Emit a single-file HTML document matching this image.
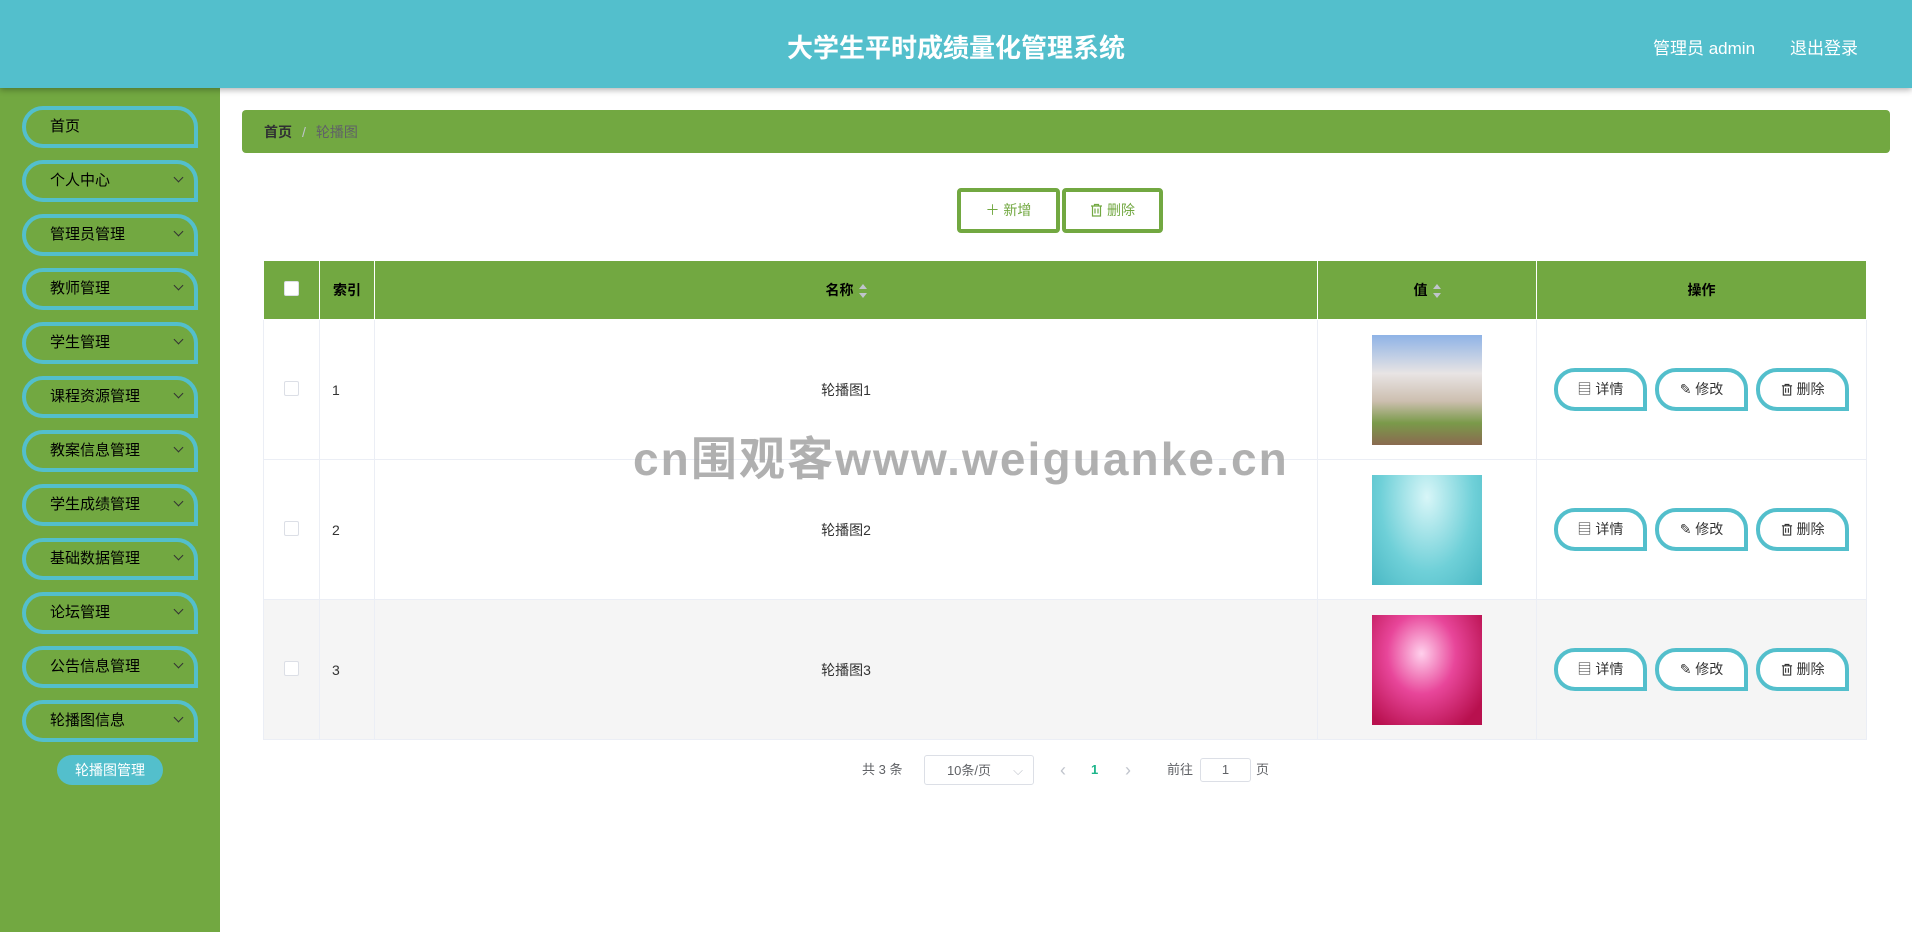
<!DOCTYPE html>
<html><head><meta charset="utf-8"><style>
*{box-sizing:border-box;margin:0;padding:0}
body{width:1912px;height:932px;position:relative;background:#fff;font-family:"Liberation Sans","Noto Sans CJK SC",sans-serif;overflow:hidden;color:#333}
.hdr{position:absolute;left:0;top:0;width:1912px;height:88px;background:#53bfcc;box-shadow:0 2px 6px rgba(0,0,0,.3);z-index:2}
.hdr .t{position:absolute;left:0;width:1912px;top:28px;text-align:center;font-size:26px;font-weight:bold;color:#fff}
.hdr .r{position:absolute;top:34px;font-size:17px;color:#fff}
.side{position:absolute;left:0;top:88px;width:220px;height:844px;background:#72a841}
.mi{position:absolute;left:22px;width:176px;height:42px;border:4px solid #53bfcc;border-radius:21px 21px 0 21px;font-size:15px;color:#000;padding-left:24px;line-height:34px}
.mi .c{position:absolute;right:12px;top:10px;width:7px;height:7px;border-right:1px solid #333;border-bottom:1px solid #333;transform:rotate(45deg)}
.sub{position:absolute;left:57px;top:755px;width:106px;height:30px;background:#53bfcc;border-radius:15px;color:#fff;font-size:14px;text-align:center;line-height:30px}
.bc{position:absolute;left:242px;top:110px;width:1648px;height:43px;background:#72a841;border-radius:4px;font-size:14px;line-height:45px;padding-left:22px}
.btn{position:absolute;top:188px;height:45px;border:4px solid #72a841;border-radius:4px;background:#fff;color:#72a841;font-size:14px;text-align:center;line-height:37px}
table{position:absolute;left:263px;top:260px;border-collapse:collapse;font-size:14px}
td,th{border:1px solid #ebeef5;text-align:center}
th{background:#72a841;height:59px;color:#000;font-weight:bold;border-color:#fff}
td{height:140px}
.cb{display:inline-block;width:15px;height:15px;border:1px solid #dcdfe6;border-radius:2px;background:#fff}
.ab{display:inline-block;width:93px;height:43px;border:4px solid #53bfcc;border-radius:21px 21px 0 21px;font-size:14px;line-height:35px;margin:0 4px;color:#333;background:#fff}
.sort{display:inline-block;vertical-align:middle;margin-left:5px;width:8px;height:14px;position:relative}
.sort:before{content:"";position:absolute;top:0;left:0;border:4px solid transparent;border-bottom:5px solid #c0c4cc;border-top:0}
.sort:after{content:"";position:absolute;bottom:0;left:0;border:4px solid transparent;border-top:5px solid #c0c4cc;border-bottom:0}
.img{display:inline-block;width:110px;height:110px;vertical-align:middle}
.wm{position:absolute;left:633px;top:423px;font-size:46px;font-weight:bold;color:rgba(150,150,150,.75);letter-spacing:2.1px;white-space:nowrap}
.pg{position:absolute;top:755px;font-size:13px;color:#606266;line-height:30px}
svg.i{vertical-align:-2px;margin-right:4px}
</style></head><body>
<div class="hdr"><div class="t">大学生平时成绩量化管理系统</div><div class="r" style="left:1653px">管理员 admin</div><div class="r" style="left:1790px">退出登录</div></div>
<div class="side">
<div class="mi" style="top:18px">首页</div>
<div class="mi" style="top:72px">个人中心<span class="c"></span></div>
<div class="mi" style="top:126px">管理员管理<span class="c"></span></div>
<div class="mi" style="top:180px">教师管理<span class="c"></span></div>
<div class="mi" style="top:234px">学生管理<span class="c"></span></div>
<div class="mi" style="top:288px">课程资源管理<span class="c"></span></div>
<div class="mi" style="top:342px">教案信息管理<span class="c"></span></div>
<div class="mi" style="top:396px">学生成绩管理<span class="c"></span></div>
<div class="mi" style="top:450px">基础数据管理<span class="c"></span></div>
<div class="mi" style="top:504px">论坛管理<span class="c"></span></div>
<div class="mi" style="top:558px">公告信息管理<span class="c"></span></div>
<div class="mi" style="top:612px">轮播图信息<span class="c"></span></div>
</div>
<div class="sub">轮播图管理</div>
<div class="bc"><b style="color:#303133">首页</b><span style="color:#c0c4cc;margin:0 10px">/</span><span style="color:#606266">轮播图</span></div>
<div class="btn" style="left:957px;width:103px">＋ 新增</div>
<div class="btn" style="left:1062px;width:101px"><svg class="i" width="13" height="14" viewBox="0 0 13 14" fill="none" stroke="#72a841" stroke-width="1.2"><path d="M1 3h11M4.5 3V1.5h4V3M2.5 3v10h8V3M5 5.5v5M8 5.5v5"/></svg>删除</div>
<table>
<tr><th style="width:56px"><span class="cb"></span></th><th style="width:55px">索引</th><th style="width:943px">名称<span class="sort"></span></th><th style="width:219px">值<span class="sort"></span></th><th style="width:330px">操作</th></tr>
<tr><td><span class="cb"></span></td><td style="text-align:left;padding-left:12px">1</td><td>轮播图1</td><td><span class="img" style="background:linear-gradient(180deg,#8fb3e6 0%,#e8e4e4 35%,#cdbfb0 60%,#7a9a4a 80%,#8a6a50 100%)"></span></td><td><span class="ab">▤ 详情</span><span class="ab">✎ 修改</span><span class="ab"><svg class="i" width="12" height="13" viewBox="0 0 13 14" fill="none" stroke="#333" stroke-width="1.2"><path d="M1 3h11M4.5 3V1.5h4V3M2.5 3v10h8V3M5 5.5v5M8 5.5v5"/></svg>删除</span></td></tr>
<tr><td><span class="cb"></span></td><td style="text-align:left;padding-left:12px">2</td><td>轮播图2</td><td><span class="img" style="background:radial-gradient(ellipse at 50% 20%,#d8f6f8,#6fd0d8 60%,#4ab8c4)"></span></td><td><span class="ab">▤ 详情</span><span class="ab">✎ 修改</span><span class="ab"><svg class="i" width="12" height="13" viewBox="0 0 13 14" fill="none" stroke="#333" stroke-width="1.2"><path d="M1 3h11M4.5 3V1.5h4V3M2.5 3v10h8V3M5 5.5v5M8 5.5v5"/></svg>删除</span></td></tr>
<tr style="background:#f5f5f5"><td><span class="cb"></span></td><td style="text-align:left;padding-left:12px">3</td><td>轮播图3</td><td><span class="img" style="background:radial-gradient(ellipse at 45% 35%,#ffd0ec,#e8469a 40%,#b8104e 85%)"></span></td><td><span class="ab">▤ 详情</span><span class="ab">✎ 修改</span><span class="ab"><svg class="i" width="12" height="13" viewBox="0 0 13 14" fill="none" stroke="#333" stroke-width="1.2"><path d="M1 3h11M4.5 3V1.5h4V3M2.5 3v10h8V3M5 5.5v5M8 5.5v5"/></svg>删除</span></td></tr>
</table>
<div class="wm">cn围观客www.weiguanke.cn</div>
<div class="pg" style="left:862px">共 3 条</div>
<div class="pg" style="left:924px;width:110px;height:30px;border:1px solid #dcdfe6;border-radius:3px;text-align:center;padding-right:20px">10条/页<span style="position:absolute;right:10px;top:0;color:#c0c4cc">⌵</span></div>
<div class="pg" style="left:1060px;color:#c0c4cc;font-size:18px">‹</div>
<div class="pg" style="left:1091px;color:#1cb58a;font-weight:bold">1</div>
<div class="pg" style="left:1125px;color:#c0c4cc;font-size:18px">›</div>
<div class="pg" style="left:1167px">前往</div>
<div class="pg" style="left:1200px;width:51px;height:24px;top:758px;line-height:22px;border:1px solid #dcdfe6;border-radius:3px;text-align:center">1</div>
<div class="pg" style="left:1256px">页</div>
</body></html>
